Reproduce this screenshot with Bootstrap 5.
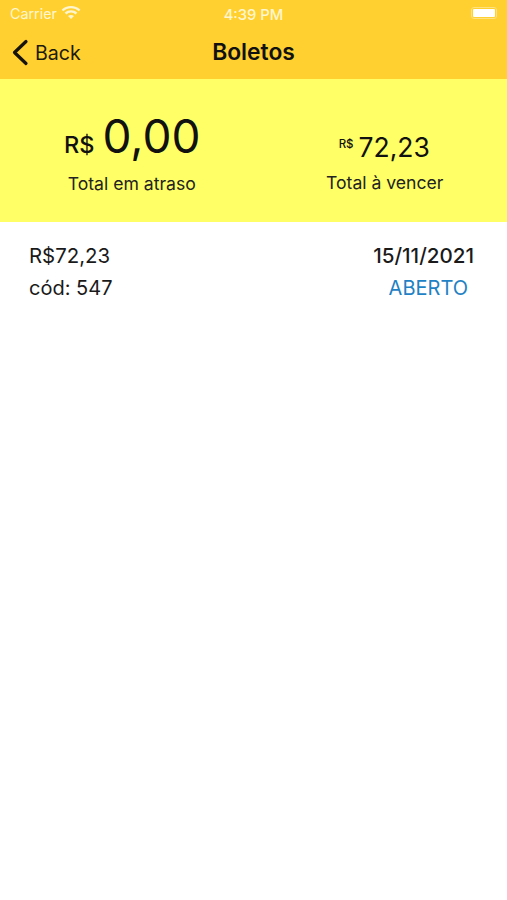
<!DOCTYPE html>
<html lang="pt-BR">
<head>
<meta charset="utf-8">
<link href="https://cdn.jsdelivr.net/npm/bootstrap@5.3.0/dist/css/bootstrap.min.css" rel="stylesheet">
<style>
html,body{height:900px;overflow:hidden}
body{font-family:Inter,"Liberation Sans",sans-serif;background:#fff;color:#111;width:507px}
.topbar{background:#ffd02f;height:79px}
.statusrow{height:27px;padding:0 10px;color:#fff6d0;font-size:14px;position:relative}
.clockt{position:absolute;left:0;right:0;top:4px;text-align:center;font-weight:500;font-size:14.8px}
.carrier{font-size:14.3px}
.battery{width:26px;height:12px;border:1px solid #ffe27f;border-radius:3px;padding:1px;display:flex;margin-top:-1px}
.battery i{display:block;flex:1;background:#fff;border-radius:1px}
.wifisvg{margin-top:-3px}
.navrow{height:52px;position:relative;padding-left:11px}
.backlbl{font-size:19.6px;color:#1c1a0c;margin-left:6px;padding-top:2px}
.navtitle{position:absolute;left:0;right:0;top:10px;text-align:center;font-size:22.8px;font-weight:600;color:#111;line-height:30px}
.summary{background:#ffff66;height:143px}
.sumcol{width:254px;text-align:center}
.sumleft{padding-top:29px}
.sumright{padding-top:46px}
.bigv{font-size:46px;line-height:56px;font-weight:400;color:#111;padding-left:11px}
.bigc{font-size:23.5px;margin-right:8px;font-weight:500}
.midv{font-size:26.5px;line-height:38px;color:#111;padding-left:8px}
.midc{font-size:11.5px;font-weight:500;vertical-align:9px;margin-right:5px}
.sumlbl{font-size:17.6px;line-height:24px;color:#222}
.sumleft .sumlbl{padding-left:10px;margin-top:-1px}
.sumright .sumlbl{padding-left:9px;margin-top:5px}
.entry{padding:18px 33px 0 29px;font-size:20.4px;line-height:32px;color:#1a1a1a}
.codev{font-size:20px}
.datev{font-size:20.6px;font-weight:500}
.stat{color:#1f82c4;padding-right:6px;font-size:20px}
</style>
</head>
<body>
<div class="topbar">
  <div class="statusrow d-flex align-items-center justify-content-between">
    <div class="d-flex align-items-center gap-1"><span class="carrier">Carrier</span>
      <svg class="wifisvg" width="20" height="15" viewBox="0 0 20 15" aria-hidden="true"><path d="M1.500 5.500C6 1 14 1 18.500 5.500M4.500 8.500C7.500 5.700 12.500 5.700 15.500 8.500" fill="none" stroke="#fff6d0" stroke-width="2.400"/><path d="M7 11C8.700 9.600 11.300 9.600 13 11L10 14Z" fill="#fff6d0"/></svg>
    </div>
    <div class="clockt">4:39 PM</div>
    <div class="battery"><i></i></div>
  </div>
  <div class="navrow d-flex align-items-center">
    <svg width="18" height="28" viewBox="0 0 18 28" aria-hidden="true"><path d="M15 2.500 3.500 13.500 15 24.500" fill="none" stroke="#15130a" stroke-width="3.200" stroke-linecap="round" stroke-linejoin="round"/></svg>
    <span class="backlbl">Back</span>
    <div class="navtitle">Boletos</div>
  </div>
</div>
<div class="summary d-flex">
  <div class="sumcol sumleft">
    <div class="bigv"><span class="bigc">R$</span>0,00</div>
    <div class="sumlbl">Total em atraso</div>
  </div>
  <div class="sumcol sumright">
    <div class="midv"><span class="midc">R$</span>72,23</div>
    <div class="sumlbl">Total à vencer</div>
  </div>
</div>
<div class="entry d-flex justify-content-between">
  <div><div>R$72,23</div><div class="codev">cód: 547</div></div>
  <div class="text-end"><div class="datev">15/11/2021</div><div class="stat">ABERTO</div></div>
</div>
<script src="https://cdn.jsdelivr.net/npm/bootstrap@5.3.0/dist/js/bootstrap.bundle.min.js"></script>
</body>
</html>
